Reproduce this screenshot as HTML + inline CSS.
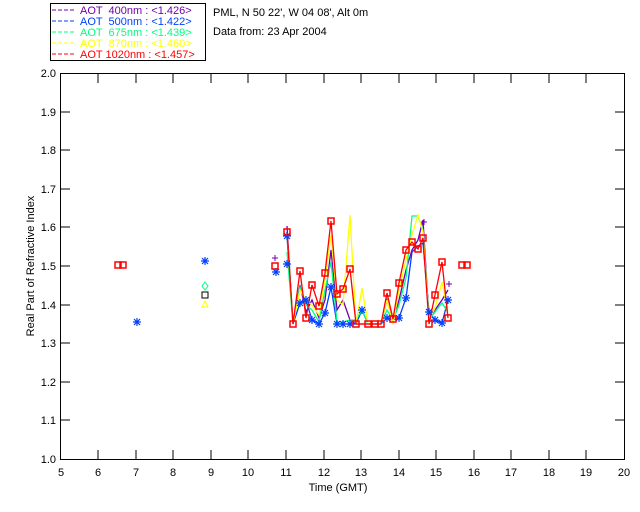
<!DOCTYPE html>
<html><head><style>
body{margin:0;background:#fff;width:640px;height:512px;overflow:hidden}
svg{display:block}
text{font-family:"Liberation Sans",sans-serif;font-size:11px}
</style></head><body>
<svg width="640" height="512" viewBox="0 0 640 512">
<defs>
<path id="ast" d="M-4 0h8M0-4v8M-3-3l6 6M-3 3l6-6" stroke="#0040ff" stroke-width="1.2"/>
</defs>
<rect x="50.5" y="3.5" width="155" height="57" fill="none" stroke="#000"/>
<g stroke-dasharray="4,2" stroke-width="1">
<line x1="52" y1="10" x2="74" y2="10" stroke="#7000b0"/>
<line x1="52" y1="21" x2="74" y2="21" stroke="#0040ff"/>
<line x1="52" y1="32" x2="74" y2="32" stroke="#00ff80"/>
<line x1="52" y1="43" x2="74" y2="43" stroke="#ffff00"/>
<line x1="52" y1="54" x2="74" y2="54" stroke="#ff0000"/>
</g>
<text x="80" y="14" fill="#7000b0" xml:space="preserve">AOT  400nm : &lt;1.426&gt;</text>
<text x="80" y="25" fill="#0040ff" xml:space="preserve">AOT  500nm : &lt;1.422&gt;</text>
<text x="80" y="36" fill="#00ff80" xml:space="preserve">AOT  675nm : &lt;1.439&gt;</text>
<text x="80" y="47" fill="#ffff00" xml:space="preserve">AOT  870nm : &lt;1.460&gt;</text>
<text x="80" y="58" fill="#ff0000" xml:space="preserve">AOT 1020nm : &lt;1.457&gt;</text>
<text x="213" y="16" fill="#000">PML, N 50 22', W 04 08', Alt 0m</text>
<text x="213" y="35" fill="#000">Data from: 23 Apr 2004</text>
<rect x="60.5" y="73.5" width="564" height="386" fill="none" stroke="#000"/>
<g stroke="#000">
<path d="M98 74v9M136 74v9M173 74v9M211 74v9M248 74v9M286 74v9M324 74v9M361 74v9M399 74v9M436 74v9M474 74v9M511 74v9M549 74v9M586 74v9
M98 459v-9M136 459v-9M173 459v-9M211 459v-9M248 459v-9M286 459v-9M324 459v-9M361 459v-9M399 459v-9M436 459v-9M474 459v-9M511 459v-9M549 459v-9M586 459v-9
M61 112h9M61 150h9M61 189h9M61 227h9M61 266h9M61 305h9M61 343h9M61 382h9M61 420h9
M624 112h-9M624 150h-9M624 189h-9M624 227h-9M624 266h-9M624 305h-9M624 343h-9M624 382h-9M624 420h-9"/>
</g>
<g fill="#000" text-anchor="end">
<text x="56" y="77">2.0</text><text x="56" y="116">1.9</text><text x="56" y="154">1.8</text><text x="56" y="193">1.7</text><text x="56" y="231">1.6</text><text x="56" y="270">1.5</text><text x="56" y="309">1.4</text><text x="56" y="347">1.3</text><text x="56" y="386">1.2</text><text x="56" y="424">1.1</text><text x="56" y="463">1.0</text>
</g>
<g fill="#000" text-anchor="middle">
<text x="61" y="476">5</text><text x="98" y="476">6</text><text x="136" y="476">7</text><text x="173" y="476">8</text><text x="211" y="476">9</text><text x="248" y="476">10</text><text x="286" y="476">11</text><text x="324" y="476">12</text><text x="361" y="476">13</text><text x="399" y="476">14</text><text x="436" y="476">15</text><text x="474" y="476">16</text><text x="511" y="476">17</text><text x="549" y="476">18</text><text x="586" y="476">19</text><text x="624" y="476">20</text>
<text x="338" y="491">Time (GMT)</text>
<text transform="translate(34,266) rotate(-90)">Real Part of Refractive Index</text>
</g>
<g fill="none" stroke-width="1.3">
<polyline stroke="#7000b0" points="287,226 293,324 300,285 306,312 312,300 319,318 325,300 331,250 337,310 343,300 350,320 356,324 362,324 368,324 375,324 381,324 387,300 393,322 399,300 406,270 412,250 418,240 423,220 429,320 435,310 442,300 448,290"/>
<polyline stroke="#0040ff" points="287,236 293,324 300,303 306,300 312,320 319,324 325,313 331,287 337,324 343,324 350,324 356,324 362,310 368,324 375,324 381,324 387,318 393,320 399,318 406,298 412,252 418,246 423,243 429,312 435,320 442,323 448,300"/>
<polyline stroke="#00ff80" points="287,252 293,324 300,287 306,305 312,310 319,322 325,290 331,262 337,322 343,322 350,320 356,320 362,310 368,324 375,324 381,324 387,310 393,320 399,305 406,278 412,216 418,216 423,230 429,320 435,312 442,303 448,312"/>
<polyline stroke="#ffff00" points="287,233 293,324 300,290 306,300 312,305 319,315 325,280 331,235 337,300 343,305 350,215 356,324 362,288 368,324 375,324 381,324 387,300 393,324 399,290 406,260 412,235 418,215 423,232 429,320 435,308 442,282 448,312"/>
<polyline stroke="#ff0000" points="287,232 293,324 300,271 306,318 312,285 319,306 325,273 331,221 337,294 343,289 350,269 356,324 362,324 368,324 375,324 381,324 387,293 393,319 399,283 406,250 412,242 418,249 423,238 429,324 435,295 442,262 448,318"/>
</g>
<g>
<use href="#ast" x="137" y="322"/><use href="#ast" x="205" y="261"/><use href="#ast" x="276" y="272"/><use href="#ast" x="287" y="264"/>
<use href="#ast" x="287" y="236"/><use href="#ast" x="300" y="303"/><use href="#ast" x="306" y="300"/><use href="#ast" x="312" y="320"/><use href="#ast" x="319" y="324"/><use href="#ast" x="325" y="313"/><use href="#ast" x="331" y="287"/><use href="#ast" x="337" y="324"/><use href="#ast" x="343" y="324"/><use href="#ast" x="350" y="324"/><use href="#ast" x="362" y="310"/><use href="#ast" x="387" y="318"/><use href="#ast" x="399" y="318"/><use href="#ast" x="406" y="298"/><use href="#ast" x="429" y="312"/><use href="#ast" x="435" y="320"/><use href="#ast" x="442" y="323"/><use href="#ast" x="448" y="300"/>
</g>
<g fill="none" stroke="#ff0000" stroke-width="1.5">
<rect x="115" y="262" width="6" height="6"/><rect x="120" y="262" width="6" height="6"/>
<rect x="272" y="263" width="6" height="6"/>
<rect x="284" y="229" width="6" height="6"/><rect x="290" y="321" width="6" height="6"/><rect x="297" y="268" width="6" height="6"/><rect x="303" y="315" width="6" height="6"/><rect x="309" y="282" width="6" height="6"/><rect x="316" y="303" width="6" height="6"/><rect x="322" y="270" width="6" height="6"/><rect x="328" y="218" width="6" height="6"/><rect x="334" y="291" width="6" height="6"/><rect x="340" y="286" width="6" height="6"/><rect x="347" y="266" width="6" height="6"/><rect x="353" y="321" width="6" height="6"/><rect x="365" y="321" width="6" height="6"/><rect x="372" y="321" width="6" height="6"/><rect x="378" y="321" width="6" height="6"/><rect x="384" y="290" width="6" height="6"/><rect x="390" y="316" width="6" height="6"/><rect x="396" y="280" width="6" height="6"/><rect x="403" y="247" width="6" height="6"/><rect x="409" y="239" width="6" height="6"/><rect x="415" y="246" width="6" height="6"/><rect x="420" y="235" width="6" height="6"/><rect x="426" y="321" width="6" height="6"/><rect x="432" y="292" width="6" height="6"/><rect x="439" y="259" width="6" height="6"/><rect x="445" y="315" width="6" height="6"/><rect x="459" y="262" width="6" height="6"/><rect x="464" y="262" width="6" height="6"/>
</g>
<rect x="202" y="292" width="6" height="6" fill="none" stroke="#000"/>
<path d="M205 282l3 4-3 4-3-4z" fill="none" stroke="#00ff80"/>
<path d="M205 301l3 6h-6z" fill="none" stroke="#ffff00"/>
<path d="M421 222h6M424 219v6M446 284h6M449 281v6M272 258h6M275 255v6" stroke="#7000b0"/>
</svg>
</body></html>
